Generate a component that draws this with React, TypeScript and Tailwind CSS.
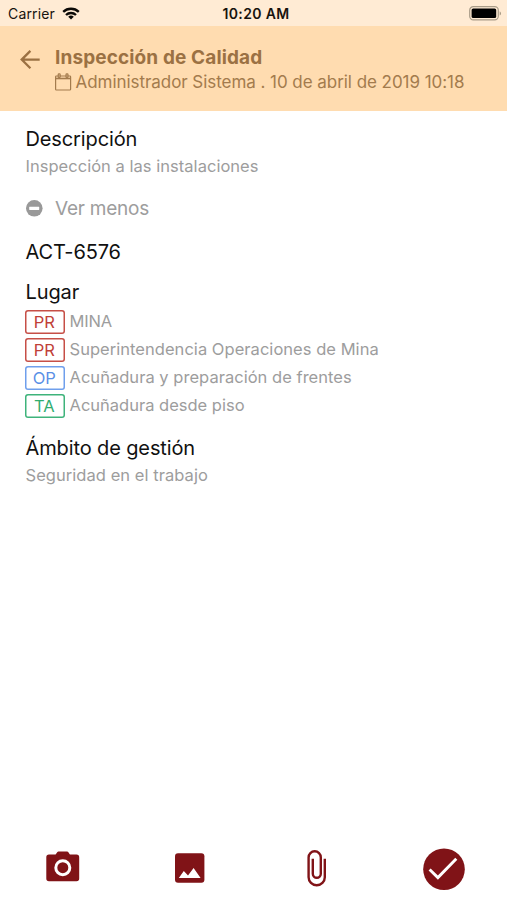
import { FC, ReactNode } from "react";

const BackIcon: FC = () => (
  <svg width="20" height="20" viewBox="0 0 20 20" fill="none" stroke="#9b7143" strokeWidth="2.3">
    <path d="M19.7 9.6H1.8M10.4 0.9L1.7 9.6l8.7 8.7" />
  </svg>
);

const CalendarIcon: FC = () => (
  <svg width="17" height="18" viewBox="0 0 17 18" fill="none" stroke="#a37b4d" strokeWidth="1.2">
    <rect x="0.6" y="3" width="15" height="14" rx="0.8" />
    <path d="M0.6 5.5h15" strokeWidth="1.6" />
    <rect x="3.2" y="0.9" width="2" height="3.6" rx="0.8" />
    <rect x="11" y="0.9" width="2" height="3.6" rx="0.8" />
  </svg>
);

const WifiIcon: FC = () => (
  <svg width="18" height="13" viewBox="0 0 18 13" fill="none" stroke="#0b0906" strokeWidth="2.3">
    <path d="M1.2 4.9a11.2 11.2 0 0 1 15.6 0" />
    <path d="M4 8a7.2 7.2 0 0 1 10 0" />
    <path d="M9 12.5L6.2 9.8a4 4 0 0 1 5.6 0z" fill="#0b0906" stroke="none" />
  </svg>
);

const BatteryIcon: FC = () => (
  <svg width="33" height="15" viewBox="0 0 33 15">
    <rect x="0.7" y="0.7" width="28.6" height="13.2" rx="3.6" fill="none" stroke="#a99c88" strokeWidth="1.2" />
    <rect x="2.6" y="2.5" width="24.6" height="9.6" rx="1.6" fill="#000" />
    <path d="M30.7 5.2c1.8.7 1.8 3.7 0 4.4z" fill="#a99c88" />
  </svg>
);

const MinusIcon: FC = () => (
  <svg width="17" height="17" viewBox="0 0 17 17">
    <circle cx="8.3" cy="8.3" r="8.3" fill="#999" />
    <rect x="3.2" y="6.7" width="10" height="3.3" rx="0.4" fill="#fff" />
  </svg>
);

const CameraIcon: FC = () => (
  <svg width="34" height="31" viewBox="0 0 34 31">
    <path
      d="M12.4.4h8.8c1.6 0 1.8 3.1 3.3 3.1H30.5a2.7 2.7 0 0 1 2.7 2.7v21.4a2.7 2.7 0 0 1-2.7 2.7H3a2.7 2.7 0 0 1-2.7-2.7V6.2A2.7 2.7 0 0 1 3 3.5h6.1c1.5 0 1.7-3.1 3.3-3.1z"
      fill="#801317"
    />
    <circle cx="16.8" cy="16.7" r="7" fill="none" stroke="#fff" strokeWidth="3" />
  </svg>
);

const ImageIcon: FC = () => (
  <svg width="30" height="30" viewBox="0 0 30 30">
    <rect x="0" y="0.2" width="29.4" height="29.6" rx="3" fill="#801317" />
    <path d="M3.8 25l5-7 4.2 4.4 5.6-7.4L25.6 25z" fill="#fff" />
  </svg>
);

const ClipIcon: FC = () => (
  <svg width="20" height="37" viewBox="0 0 20 37" fill="none" stroke="#801317" strokeWidth="2.4">
    <path d="M17.8 8.7v18.5a8.1 8.1 0 0 1-16.2 0V7.4a6.1 6.1 0 0 1 12.2 0v16.3a4 4 0 0 1-8 0V8.7" />
  </svg>
);

const CheckIcon: FC = () => (
  <svg width="42" height="42" viewBox="0 0 42 42" fill="none">
    <circle cx="21" cy="21.2" r="20.8" fill="#801317" />
    <path d="M6.6 21.5l8.3 8.1L33.3 10.7" stroke="#fff" strokeWidth="2.9" />
  </svg>
);

const places = [
  { tag: "PR", name: "MINA", style: "shadow-[inset_0_0_0_1.5px_#c64f47] text-[#c04038]", track: "tracking-[-0.15px]" },
  { tag: "PR", name: "Superintendencia Operaciones de Mina", style: "shadow-[inset_0_0_0_1.5px_#c64f47] text-[#c04038]", track: "tracking-[0.04px]" },
  { tag: "OP", name: "Acuñadura y preparación de frentes", style: "shadow-[inset_0_0_0_1.5px_#6f9fec] text-[#5a8fe6]", track: "tracking-[0.03px]" },
  { tag: "TA", name: "Acuñadura desde piso", style: "shadow-[inset_0_0_0_1.5px_#3eb37b] text-[#31ad70]", track: "tracking-normal" },
];

const Heading: FC<{ children: ReactNode }> = ({ children }) => (
  <h2 className="h-7 text-[20px] leading-7 tracking-[-0.12px] text-[#111]">{children}</h2>
);

const App: FC = () => {
  return (
    <div className="flex h-[900px] w-[507px] flex-col overflow-hidden whitespace-nowrap bg-white font-['Inter',sans-serif]">
      <div className="grid h-[26px] grid-cols-3 items-center bg-[#ffebd4] pl-2 pr-[5px] text-[14px] text-[#17130e]">
        <div className="flex items-center gap-[7px] pt-px">
          <span className="tracking-[0.15px]">Carrier</span>
          <WifiIcon />
        </div>
        <span className="pl-[2px] pt-px text-center font-semibold tracking-[0.35px]">10:20 AM</span>
        <div className="flex justify-end">
          <BatteryIcon />
        </div>
      </div>

      <header className="flex h-[85px] bg-[#ffdcb0] pl-5 pt-[18px]">
        <div className="pt-[6px]">
          <BackIcon />
        </div>
        <div className="ml-[15px]">
          <h1 className="h-[25px] pt-px text-[19px] font-bold leading-[26px] tracking-[0.12px] text-[#9b7143]">
            Inspección de Calidad
          </h1>
          <div className="flex h-[26px] items-center gap-[3.5px] text-[17px] tracking-[-0.05px] text-[#a37b4d]">
            <CalendarIcon />
            <span className="pt-px">Administrador Sistema . 10 de abril de 2019 10:18</span>
          </div>
        </div>
      </header>

      <main className="flex-1 pl-[25.5px] pt-[14px]">
        <Heading>Descripción</Heading>
        <p className="h-[26px] text-[16.5px] leading-[26px] tracking-[0.03px] text-[#9d9d9d]">
          Inspección a las instalaciones
        </p>
        <div className="mt-4 flex h-[26px] items-center gap-[12.5px] text-[19px] tracking-[-0.22px] text-[#9d9d9d]">
          <MinusIcon />
          <span className="pt-[2px]">Ver menos</span>
        </div>
        <div className="mt-[17px]">
          <Heading>ACT-6576</Heading>
        </div>
        <div className="mt-3">
          <Heading>Lugar</Heading>
        </div>
        <ul className="-ml-[0.5px] mt-[2px]">
          {places.map((place, i) => (
            <li key={i} className="flex h-7 items-center gap-[5px]">
              <span
                className={`flex h-6 w-[39.5px] items-center justify-center rounded-[3px] pr-px text-[16.5px] ${place.style}`}
              >
                {place.tag}
              </span>
              <span className={`pb-[2px] text-[16.5px] text-[#9d9d9d] ${place.track}`}>{place.name}</span>
            </li>
          ))}
        </ul>
        <div className="mt-[14px]">
          <Heading>Ámbito de gestión</Heading>
        </div>
        <p className="h-[26px] text-[16.5px] leading-[26px] tracking-[0.05px] text-[#9d9d9d]">Seguridad en el trabajo</p>
      </main>

      <footer className="grid h-[64px] grid-cols-4 justify-items-center pb-[10px]">
        <div className="pt-[15px]">
          <CameraIcon />
        </div>
        <div className="pt-[17px]">
          <ImageIcon />
        </div>
        <div className="pt-[14px]">
          <ClipIcon />
        </div>
        <div className="pt-[12px]">
          <CheckIcon />
        </div>
      </footer>
    </div>
  );
};

export default App;
